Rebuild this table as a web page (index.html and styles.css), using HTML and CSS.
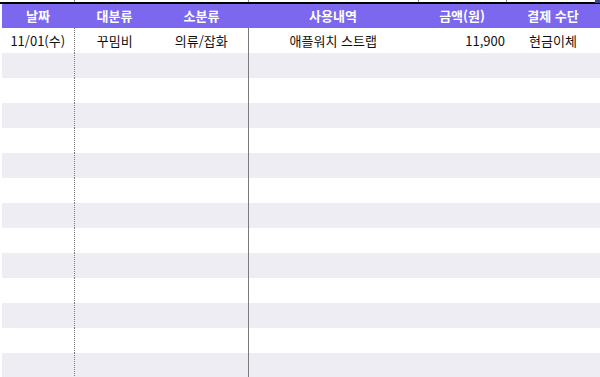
FILE: index.html
```html
<!DOCTYPE html>
<html lang="ko">
<head>
<meta charset="utf-8">
<link rel="stylesheet" href="styles.css">
</head>
<body>
<div class="sheet">
  <div class="topstrip">
    <span class="tick t1"></span>
    <span class="tick t2"></span>
    <span class="tick t3"></span>
    <span class="tick t4"></span>
    <span class="corner"></span>
  </div>
  <div class="blackline"></div>
  <table class="ledger">
    <colgroup>
      <col class="c-date"><col class="c-major"><col class="c-minor"><col class="c-desc"><col class="c-amt"><col class="c-pay">
    </colgroup>
    <thead>
      <tr>
        <th>날짜</th><th>대분류</th><th>소분류</th><th>사용내역</th><th>금액(원)</th><th>결제 수단</th>
      </tr>
    </thead>
    <tbody>
      <tr><td>11/01(수)</td><td class="major">꾸밈비</td><td>의류/잡화</td><td class="desc">애플워치 스트랩</td><td class="amt">11,900</td><td>현금이체</td></tr>
      <tr><td></td><td class="major"></td><td></td><td class="desc"></td><td class="amt"></td><td></td></tr>
      <tr><td></td><td class="major"></td><td></td><td class="desc"></td><td class="amt"></td><td></td></tr>
      <tr><td></td><td class="major"></td><td></td><td class="desc"></td><td class="amt"></td><td></td></tr>
      <tr><td></td><td class="major"></td><td></td><td class="desc"></td><td class="amt"></td><td></td></tr>
      <tr><td></td><td class="major"></td><td></td><td class="desc"></td><td class="amt"></td><td></td></tr>
      <tr><td></td><td class="major"></td><td></td><td class="desc"></td><td class="amt"></td><td></td></tr>
      <tr><td></td><td class="major"></td><td></td><td class="desc"></td><td class="amt"></td><td></td></tr>
      <tr><td></td><td class="major"></td><td></td><td class="desc"></td><td class="amt"></td><td></td></tr>
      <tr><td></td><td class="major"></td><td></td><td class="desc"></td><td class="amt"></td><td></td></tr>
      <tr><td></td><td class="major"></td><td></td><td class="desc"></td><td class="amt"></td><td></td></tr>
      <tr><td></td><td class="major"></td><td></td><td class="desc"></td><td class="amt"></td><td></td></tr>
      <tr><td></td><td class="major"></td><td></td><td class="desc"></td><td class="amt"></td><td></td></tr>
      <tr><td></td><td class="major"></td><td></td><td class="desc"></td><td class="amt"></td><td></td></tr>
    </tbody>
  </table>
</div>
</body>
</html>
```

FILE: styles.css
```css
html, body {
  margin: 0;
  padding: 0;
  background: #ffffff;
  overflow: hidden;
}
body {
  width: 600px;
  height: 377px;
  font-family: "Noto Sans CJK KR", "Noto Sans", sans-serif;
}
.sheet {
  width: 600px;
}
.topstrip {
  position: relative;
  height: 2px;
  background: #ffffff;
}
.tick {
  position: absolute;
  top: 0;
  width: 1px;
  height: 2px;
  background: #8a8a8a;
}
.t1 { left: 74px; }
.t2 { left: 248px; }
.t3 { left: 418px; }
.t4 { left: 506px; }
.corner {
  position: absolute;
  right: 0;
  top: 0;
  width: 5px;
  height: 3px;
  background: #3a4a8a;
}
.blackline {
  height: 2px;
  background: #000000;
}
.ledger {
  border-collapse: collapse;
  table-layout: fixed;
  width: 598px;
  margin-left: 2px;
}
.c-date { width: 72px; }
.c-major { width: 81px; }
.c-minor { width: 93px; }
.c-desc { width: 170px; }
.c-amt { width: 88px; }
.c-pay { width: 94px; }
.ledger th {
  height: 24px;
  padding: 0;
  background: #7b68ee;
  color: #ffffff;
  font-size: 13px;
  font-weight: 700;
  text-align: center;
  vertical-align: middle;
  line-height: 24px;
}
.ledger td {
  height: 25px;
  padding: 0;
  font-size: 13px;
  color: #111111;
  text-align: center;
  vertical-align: middle;
  line-height: 25px;
  white-space: nowrap;
}
.ledger tbody tr:nth-child(even) td {
  background: #eeedf3;
}
.ledger td.major {
  border-left: 1px dotted #7a7a7a;
}
.ledger td.desc {
  border-left: 1px solid #7a7a7a;
}
.ledger td.amt {
  text-align: right;
  padding-right: 1px;
}
```
